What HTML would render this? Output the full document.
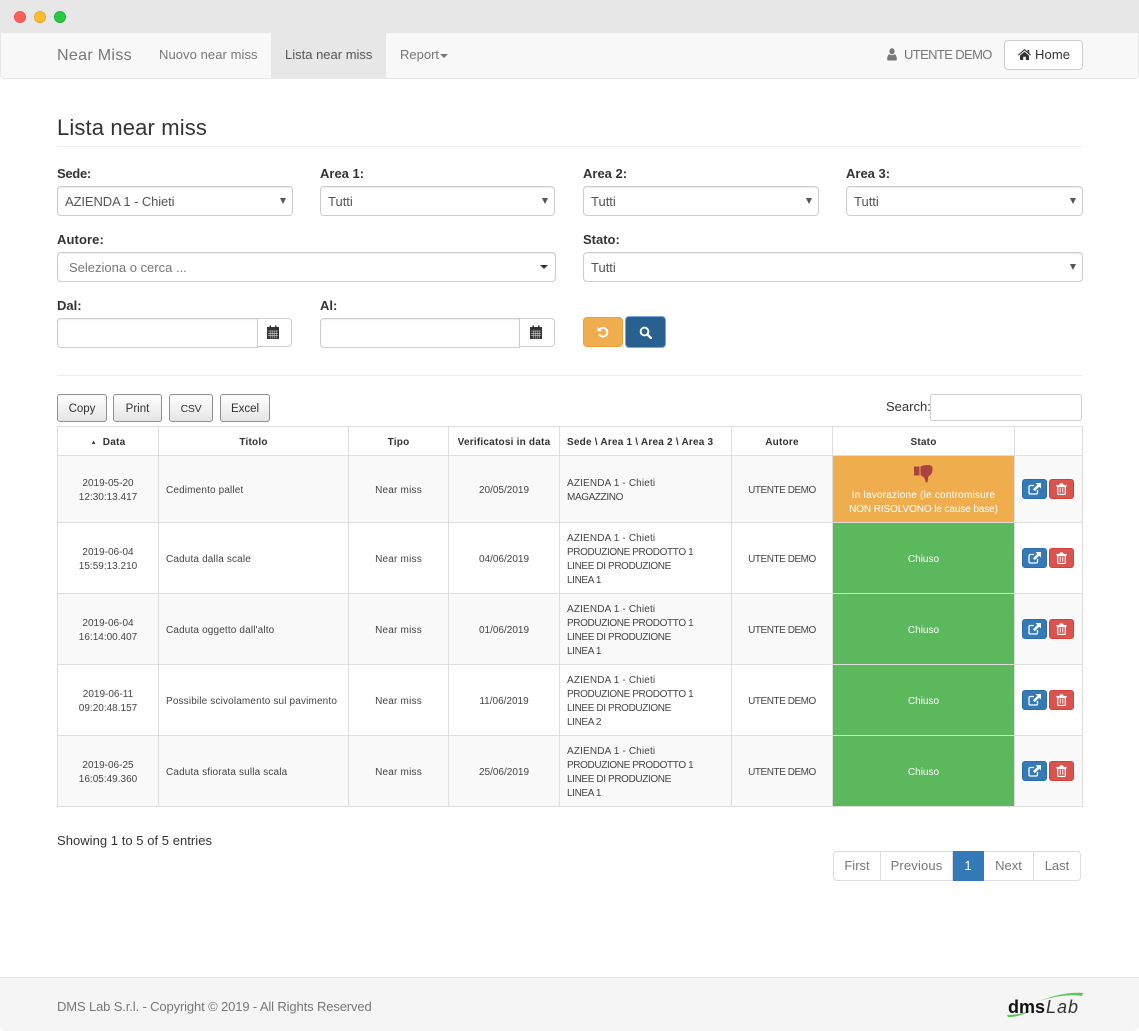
<!DOCTYPE html>
<html><head><meta charset="utf-8"><title>Lista near miss</title>
<style>
*{box-sizing:border-box}
html,body{margin:0;padding:0;width:1139px;height:1031px;overflow:hidden;background:#e7e7e7}
body{font-family:"Liberation Sans",sans-serif;font-size:13px;color:#333;position:relative}
.a{position:absolute;white-space:nowrap}
.t{line-height:18px}
#win{position:absolute;left:0;top:33px;width:1139px;height:998px;background:#fff}
.dot{position:absolute;top:11px;width:12px;height:12px;border-radius:50%}
.lab{font-weight:bold;font-size:13px;color:#333;line-height:18px}
.fc{position:absolute;height:30px;border:1px solid #ccc;border-radius:4px;background:#fff;box-shadow:inset 0 1px 1px rgba(0,0,0,.075);color:#555;font-size:13px;line-height:28px;padding:1px 0 0 7px}
.arr{position:absolute;right:6px;top:11px;width:0;height:0;border-left:3px solid transparent;border-right:3px solid transparent;border-top:6px solid #555}
.bb{position:absolute;top:394px;height:28px;border:1px solid #8f8f8f;border-radius:3px;background:linear-gradient(#fff,#e4e4e4);text-align:center;font-size:11.5px;line-height:28px;color:#333}
table{position:absolute;left:57px;top:426px;width:1026px;border-collapse:collapse;table-layout:fixed;font-size:10px;color:#444}
td,th{border:1px solid #ddd;padding:4px 8px 0;vertical-align:middle;text-align:center;line-height:14px;overflow:hidden;white-space:nowrap}
th{font-weight:bold;font-size:10px;color:#333;background:#fff;letter-spacing:.22px}
td.l,th.l{text-align:left;padding-left:7px}
td.l{letter-spacing:.15px}
.c{letter-spacing:-.38px}
.m{letter-spacing:.2px}
.u{letter-spacing:-.46px}
tr.odd td{background:#f9f9f9}
td.ok{background:#5cb85c!important;color:#fff;font-size:10px}
td.wa{background:#f0ad4e!important;color:#fff;font-size:10px;padding-top:3px}
td:last-child{padding:0 0 0 7px;text-align:left;font-size:0}
.ib{display:inline-block;width:25px;height:20px;border-radius:3px;vertical-align:middle;text-align:center;padding-top:3px;margin-right:2px}
.ib.bl{background:#337ab7;border:1px solid #2e6da4}
.ib.rd{background:#d9534f;border:1px solid #d43f3a}
.ib svg{display:block;margin:0 auto}
.pg{position:absolute;top:851px;height:30px;border:1px solid #ddd;border-left:0;text-align:center;line-height:28px;font-size:13px;color:#777;background:#fff}
</style></head><body>
<div class="dot" style="left:14px;background:#ff5f57;border:1px solid #e8524b"></div>
<div class="dot" style="left:34px;background:#ffbd2e;border:1px solid #e6a925"></div>
<div class="dot" style="left:54px;background:#28c940;border:1px solid #22b038"></div>
<div id="win"></div>

<div class="a" style="left:0;top:33px;width:1139px;height:46px;background:#f8f8f8;border:1px solid #e7e7e7;border-top:0;border-radius:0 0 4px 4px"></div>
<div class="a" style="left:271px;top:33px;width:115px;height:45px;background:#e7e7e7"></div>
<div class="a t" style="left:57px;top:47px;font-size:16px;color:#777;letter-spacing:.33px">Near Miss</div>
<div class="a t" style="left:159px;top:46px;color:#777;letter-spacing:.07px">Nuovo near miss</div>
<div class="a t" style="left:285px;top:46px;color:#555">Lista near miss</div>
<div class="a t" style="left:400px;top:46px;color:#777">Report</div>
<div class="a" style="left:440px;top:54px;width:0;height:0;border-left:4px solid transparent;border-right:4px solid transparent;border-top:4px solid #777"></div>
<svg class="a" style="left:887px;top:48px" width="10" height="13" viewBox="0 0 12 13" preserveAspectRatio="none"><circle cx="6" cy="3.300" r="3.100" fill="#777"/><path d="M1 12.500a1 1 0 0 1-.8-1C.3 8.500 1.200 6.600 3 6.300c1.800 1.200 4.200 1.200 6 0 1.800.3 2.700 2.200 2.800 5.200a1 1 0 0 1-.8 1z" fill="#777"/></svg>
<div class="a t" style="left:904px;top:46px;color:#777;letter-spacing:-.62px">UTENTE DEMO</div>
<div class="a" style="left:1004px;top:40px;width:79px;height:30px;background:#fff;border:1px solid #ccc;border-radius:4px"></div>
<svg class="a" style="left:1018px;top:49px" width="13" height="11" viewBox="0 0 13 11"><path d="M6.500 0 9.500 2.600V1h1.700v3.100L13 5.700l-.7.8L6.500 1.500.7 6.500 0 5.700z" fill="#333"/><path d="M2 6.600 6.500 2.700 11 6.600V11H7.800V7.700H5.200V11H2z" fill="#333"/></svg>
<div class="a t" style="left:1035px;top:46px;color:#333;letter-spacing:.1px">Home</div>

<div class="a" style="left:57px;top:114px;font-size:22px;line-height:27px;color:#333;letter-spacing:.14px">Lista near miss</div>
<div class="a" style="left:57px;top:146px;width:1026px;height:1px;background:#eee"></div>

<div class="a lab" style="left:57px;top:165px;letter-spacing:-.3px">Sede:</div>
<div class="a lab" style="left:320px;top:165px">Area 1:</div>
<div class="a lab" style="left:583px;top:165px">Area 2:</div>
<div class="a lab" style="left:846px;top:165px">Area 3:</div>
<div class="fc" style="left:57px;top:186px;width:236px;letter-spacing:-.1px">AZIENDA 1 - Chieti<i class="arr"></i></div>
<div class="fc" style="left:320px;top:186px;width:235px">Tutti<i class="arr"></i></div>
<div class="fc" style="left:583px;top:186px;width:236px">Tutti<i class="arr"></i></div>
<div class="fc" style="left:846px;top:186px;width:237px">Tutti<i class="arr"></i></div>

<div class="a lab" style="left:57px;top:231px;letter-spacing:.1px">Autore:</div>
<div class="a lab" style="left:583px;top:231px">Stato:</div>
<div class="fc" style="left:57px;top:252px;width:499px;padding-left:11px;color:#777">Seleziona o cerca ...<i style="position:absolute;right:7px;top:12px;width:0;height:0;border-left:4px solid transparent;border-right:4px solid transparent;border-top:4px solid #333"></i></div>
<div class="fc" style="left:583px;top:252px;width:500px">Tutti<i class="arr"></i></div>

<div class="a lab" style="left:57px;top:297px">Dal:</div>
<div class="a lab" style="left:320px;top:297px">Al:</div>
<div class="fc" style="left:57px;top:318px;width:201px;border-radius:4px 0 0 4px"></div>
<div class="a" style="left:257px;top:318px;width:35px;height:29px;border:1px solid #ccc;border-radius:0 4px 4px 0;background:#fff"></div>
<svg class="a" style="left:267px;top:325px" width="12" height="14" viewBox="0 0 12 14"><path d="M0 2h2.500V.5h1.500V2h4V.5h1.500V2H12v12H0z" fill="#333"/><path d="M1 6h10M1 8.300h10M1 10.600h10M3.200 5.500v8M5.200 5.500v8M7.200 5.500v8M9.200 5.500v8" stroke="#cfcfcf" stroke-width=".6"/></svg>
<div class="fc" style="left:320px;top:318px;width:200px;border-radius:4px 0 0 4px"></div>
<div class="a" style="left:519px;top:318px;width:36px;height:29px;border:1px solid #ccc;border-radius:0 4px 4px 0;background:#fff"></div>
<svg class="a" style="left:530px;top:325px" width="12" height="14" viewBox="0 0 12 14"><path d="M0 2h2.500V.5h1.500V2h4V.5h1.500V2H12v12H0z" fill="#333"/><path d="M1 6h10M1 8.300h10M1 10.600h10M3.200 5.500v8M5.200 5.500v8M7.200 5.500v8M9.200 5.500v8" stroke="#cfcfcf" stroke-width=".6"/></svg>

<div class="a" style="left:583px;top:317px;width:40px;height:30px;background:#f0ad4e;border:1px solid #eea236;border-radius:4px"></div>
<svg class="a" style="left:597px;top:326px" width="12" height="12" viewBox="0 0 12 12"><path d="M3 3.200A4.300 4.300 0 1 1 2.300 8.400" fill="none" stroke="#fff" stroke-width="1.900"/><path d="M.6 1v4.300h4.300z" fill="#fff"/></svg>
<div class="a" style="left:625px;top:316px;width:41px;height:32px;background:#286090;border:1px solid #7ba6dc;border-radius:4px"></div>
<svg class="a" style="left:639px;top:326px" width="13" height="13" viewBox="0 0 13 13"><circle cx="5.500" cy="5.500" r="3.900" fill="none" stroke="#fff" stroke-width="1.900"/><path d="M8.300 8.300 12 12" stroke="#fff" stroke-width="2.300" stroke-linecap="round"/></svg>

<div class="a" style="left:57px;top:375px;width:1026px;height:1px;background:#eee"></div>

<div class="bb" style="left:57px;width:50px">Copy</div>
<div class="bb" style="left:113px;width:49px">Print</div>
<div class="bb" style="left:169px;width:44px;font-size:10.5px;letter-spacing:-.3px">CSV</div>
<div class="bb" style="left:220px;width:50px">Excel</div>
<div class="a t" style="left:886px;top:398px">Search:</div>
<div class="a" style="left:930px;top:394px;width:152px;height:27px;border:1px solid #ccc;border-radius:3px;background:#fff"></div>

<table>
<colgroup><col style="width:101px"><col style="width:190px"><col style="width:100px"><col style="width:111px"><col style="width:172px"><col style="width:101px"><col style="width:182px"><col style="width:68px"></colgroup>
<tr style="height:29px"><th><span style="font-size:6px;vertical-align:1px">▲</span>&nbsp; Data</th><th>Titolo</th><th>Tipo</th><th>Verificatosi in data</th><th class="l">Sede \ Area 1 \ Area 2 \ Area 3</th><th>Autore</th><th>Stato</th><th></th></tr>
<tr class="odd" style="height:67px"><td>2019-05-20<br>12:30:13.417</td><td class="l">Cedimento pallet</td><td class="m">Near miss</td><td>20/05/2019</td><td class="l">AZIENDA 1 - Chieti<br><span class="c">MAGAZZINO</span></td><td class="u">UTENTE DEMO</td><td class="wa"><svg width="19" height="18" viewBox="0 0 19 18" style="display:block;margin:0 auto 6px"><path d="M0 1.500h5.500v9H0z" fill="#a94442"/><path d="M6.500 1.500C8.500 .5 11 0 14 0c3 0 4.500 1 4.500 3.500 0 3-.5 5-2 6.500-1 .8-1.800 1-2.300 2-.3 1.500-.2 3.500-.7 5-.3.700-1.500.7-1.800 0-.5-1.700-.9-3.200-1.700-4.500L6.500 10z" fill="#a94442"/></svg><span style="letter-spacing:.22px">In lavorazione (le contromisure</span><br><span style="letter-spacing:-.1px">NON RISOLVONO le cause base)</span></td><td><span class="ib bl"><svg width="13" height="12" viewBox="0 0 13 12"><path d="M6 2.500H2.200C1.500 2.500 1 3 1 3.700v6.100c0 .7.500 1.200 1.200 1.200h6.100c.7 0 1.200-.5 1.200-1.200V7" fill="none" stroke="#fff" stroke-width="1.300"/><path d="M7.500 0H13v5.500L11.200 3.700 6.800 8.100 5 6.300 9.300 1.900z" fill="#fff"/></svg></span><span class="ib rd"><svg width="11" height="12" viewBox="0 0 11 12"><path d="M.5 2.200h10v1H.5zM3.500 2.200 4.200.6h2.600l.7 1.600" fill="#fff" stroke="#fff" stroke-width=".5"/><path d="M1.700 3.500v7c0 .6.400 1 1 1h5.600c.6 0 1-.4 1-1v-7z" fill="none" stroke="#fff" stroke-width="1.200"/><path d="M4.200 4.800v5M6.800 4.800v5" stroke="#fff" stroke-width=".9"/></svg></span></td></tr>
<tr style="height:71px"><td>2019-06-04<br>15:59:13.210</td><td class="l">Caduta dalla scale</td><td class="m">Near miss</td><td>04/06/2019</td><td class="l">AZIENDA 1 - Chieti<br><span class="c">PRODUZIONE PRODOTTO 1</span><br><span class="c">LINEE DI PRODUZIONE</span><br><span class="c">LINEA 1</span></td><td class="u">UTENTE DEMO</td><td class="ok">Chiuso</td><td><span class="ib bl"><svg width="13" height="12" viewBox="0 0 13 12"><path d="M6 2.500H2.200C1.500 2.500 1 3 1 3.700v6.100c0 .7.500 1.200 1.200 1.200h6.100c.7 0 1.200-.5 1.200-1.200V7" fill="none" stroke="#fff" stroke-width="1.300"/><path d="M7.500 0H13v5.500L11.200 3.700 6.800 8.100 5 6.300 9.300 1.900z" fill="#fff"/></svg></span><span class="ib rd"><svg width="11" height="12" viewBox="0 0 11 12"><path d="M.5 2.200h10v1H.5zM3.500 2.200 4.200.6h2.600l.7 1.600" fill="#fff" stroke="#fff" stroke-width=".5"/><path d="M1.700 3.500v7c0 .6.400 1 1 1h5.600c.6 0 1-.4 1-1v-7z" fill="none" stroke="#fff" stroke-width="1.200"/><path d="M4.200 4.800v5M6.800 4.800v5" stroke="#fff" stroke-width=".9"/></svg></span></td></tr>
<tr class="odd" style="height:71px"><td>2019-06-04<br>16:14:00.407</td><td class="l">Caduta oggetto dall'alto</td><td class="m">Near miss</td><td>01/06/2019</td><td class="l">AZIENDA 1 - Chieti<br><span class="c">PRODUZIONE PRODOTTO 1</span><br><span class="c">LINEE DI PRODUZIONE</span><br><span class="c">LINEA 1</span></td><td class="u">UTENTE DEMO</td><td class="ok">Chiuso</td><td><span class="ib bl"><svg width="13" height="12" viewBox="0 0 13 12"><path d="M6 2.500H2.200C1.500 2.500 1 3 1 3.700v6.100c0 .7.500 1.200 1.200 1.200h6.100c.7 0 1.200-.5 1.200-1.200V7" fill="none" stroke="#fff" stroke-width="1.300"/><path d="M7.500 0H13v5.500L11.200 3.700 6.800 8.100 5 6.300 9.300 1.900z" fill="#fff"/></svg></span><span class="ib rd"><svg width="11" height="12" viewBox="0 0 11 12"><path d="M.5 2.200h10v1H.5zM3.500 2.200 4.200.6h2.600l.7 1.600" fill="#fff" stroke="#fff" stroke-width=".5"/><path d="M1.700 3.500v7c0 .6.400 1 1 1h5.600c.6 0 1-.4 1-1v-7z" fill="none" stroke="#fff" stroke-width="1.200"/><path d="M4.200 4.800v5M6.800 4.800v5" stroke="#fff" stroke-width=".9"/></svg></span></td></tr>
<tr style="height:71px"><td>2019-06-11<br>09:20:48.157</td><td class="l">Possibile scivolamento sul pavimento</td><td class="m">Near miss</td><td>11/06/2019</td><td class="l">AZIENDA 1 - Chieti<br><span class="c">PRODUZIONE PRODOTTO 1</span><br><span class="c">LINEE DI PRODUZIONE</span><br><span class="c">LINEA 2</span></td><td class="u">UTENTE DEMO</td><td class="ok">Chiuso</td><td><span class="ib bl"><svg width="13" height="12" viewBox="0 0 13 12"><path d="M6 2.500H2.200C1.500 2.500 1 3 1 3.700v6.100c0 .7.500 1.200 1.200 1.200h6.100c.7 0 1.200-.5 1.200-1.200V7" fill="none" stroke="#fff" stroke-width="1.300"/><path d="M7.500 0H13v5.500L11.200 3.700 6.800 8.100 5 6.300 9.300 1.900z" fill="#fff"/></svg></span><span class="ib rd"><svg width="11" height="12" viewBox="0 0 11 12"><path d="M.5 2.200h10v1H.5zM3.500 2.200 4.200.6h2.600l.7 1.600" fill="#fff" stroke="#fff" stroke-width=".5"/><path d="M1.700 3.500v7c0 .6.400 1 1 1h5.600c.6 0 1-.4 1-1v-7z" fill="none" stroke="#fff" stroke-width="1.200"/><path d="M4.200 4.800v5M6.800 4.800v5" stroke="#fff" stroke-width=".9"/></svg></span></td></tr>
<tr class="odd" style="height:71px"><td>2019-06-25<br>16:05:49.360</td><td class="l">Caduta sfiorata sulla scala</td><td class="m">Near miss</td><td>25/06/2019</td><td class="l">AZIENDA 1 - Chieti<br><span class="c">PRODUZIONE PRODOTTO 1</span><br><span class="c">LINEE DI PRODUZIONE</span><br><span class="c">LINEA 1</span></td><td class="u">UTENTE DEMO</td><td class="ok">Chiuso</td><td><span class="ib bl"><svg width="13" height="12" viewBox="0 0 13 12"><path d="M6 2.500H2.200C1.500 2.500 1 3 1 3.700v6.100c0 .7.500 1.200 1.200 1.200h6.100c.7 0 1.200-.5 1.200-1.200V7" fill="none" stroke="#fff" stroke-width="1.300"/><path d="M7.500 0H13v5.500L11.200 3.700 6.800 8.100 5 6.300 9.300 1.900z" fill="#fff"/></svg></span><span class="ib rd"><svg width="11" height="12" viewBox="0 0 11 12"><path d="M.5 2.200h10v1H.5zM3.500 2.200 4.200.6h2.600l.7 1.600" fill="#fff" stroke="#fff" stroke-width=".5"/><path d="M1.700 3.500v7c0 .6.400 1 1 1h5.600c.6 0 1-.4 1-1v-7z" fill="none" stroke="#fff" stroke-width="1.200"/><path d="M4.200 4.800v5M6.800 4.800v5" stroke="#fff" stroke-width=".9"/></svg></span></td></tr>
</table>

<div class="a t" style="left:57px;top:832px;letter-spacing:.04px">Showing 1 to 5 of 5 entries</div>
<div class="pg" style="left:833px;width:48px;border-left:1px solid #ddd;border-radius:4px 0 0 4px">First</div>
<div class="pg" style="left:881px;width:72px;letter-spacing:.15px">Previous</div>
<div class="pg" style="left:953px;width:31px;background:#337ab7;border-color:#337ab7;color:#fff">1</div>
<div class="pg" style="left:984px;width:50px">Next</div>
<div class="pg" style="left:1034px;width:47px;border-radius:0 4px 4px 0">Last</div>

<div class="a" style="left:0;top:977px;width:1139px;height:54px;background:#f5f5f5;border-top:1px solid #e0e0e0;border-radius:0 0 6px 6px"></div>
<div class="a t" style="left:57px;top:998px;color:#777;letter-spacing:-.13px">DMS Lab S.r.l. - Copyright © 2019 - All Rights Reserved</div>
<svg class="a" style="left:1004px;top:991px" width="80" height="28" viewBox="0 0 80 28"><path d="M36 10C50 4 66 1 79 2L78 5C66 3 50 5 36 10z" fill="#5cc45c"/><path d="M3 24C12 24 20 22 27 19 20 24 12 26 4 26z" fill="#5cc45c"/><text x="4" y="22" font-family="'Liberation Sans',sans-serif" font-weight="bold" font-size="18" fill="#111">dms</text><text x="42" y="22" font-family="'Liberation Sans',sans-serif" font-style="italic" font-size="18" letter-spacing="1" fill="#333">Lab</text></svg>
</body></html>
